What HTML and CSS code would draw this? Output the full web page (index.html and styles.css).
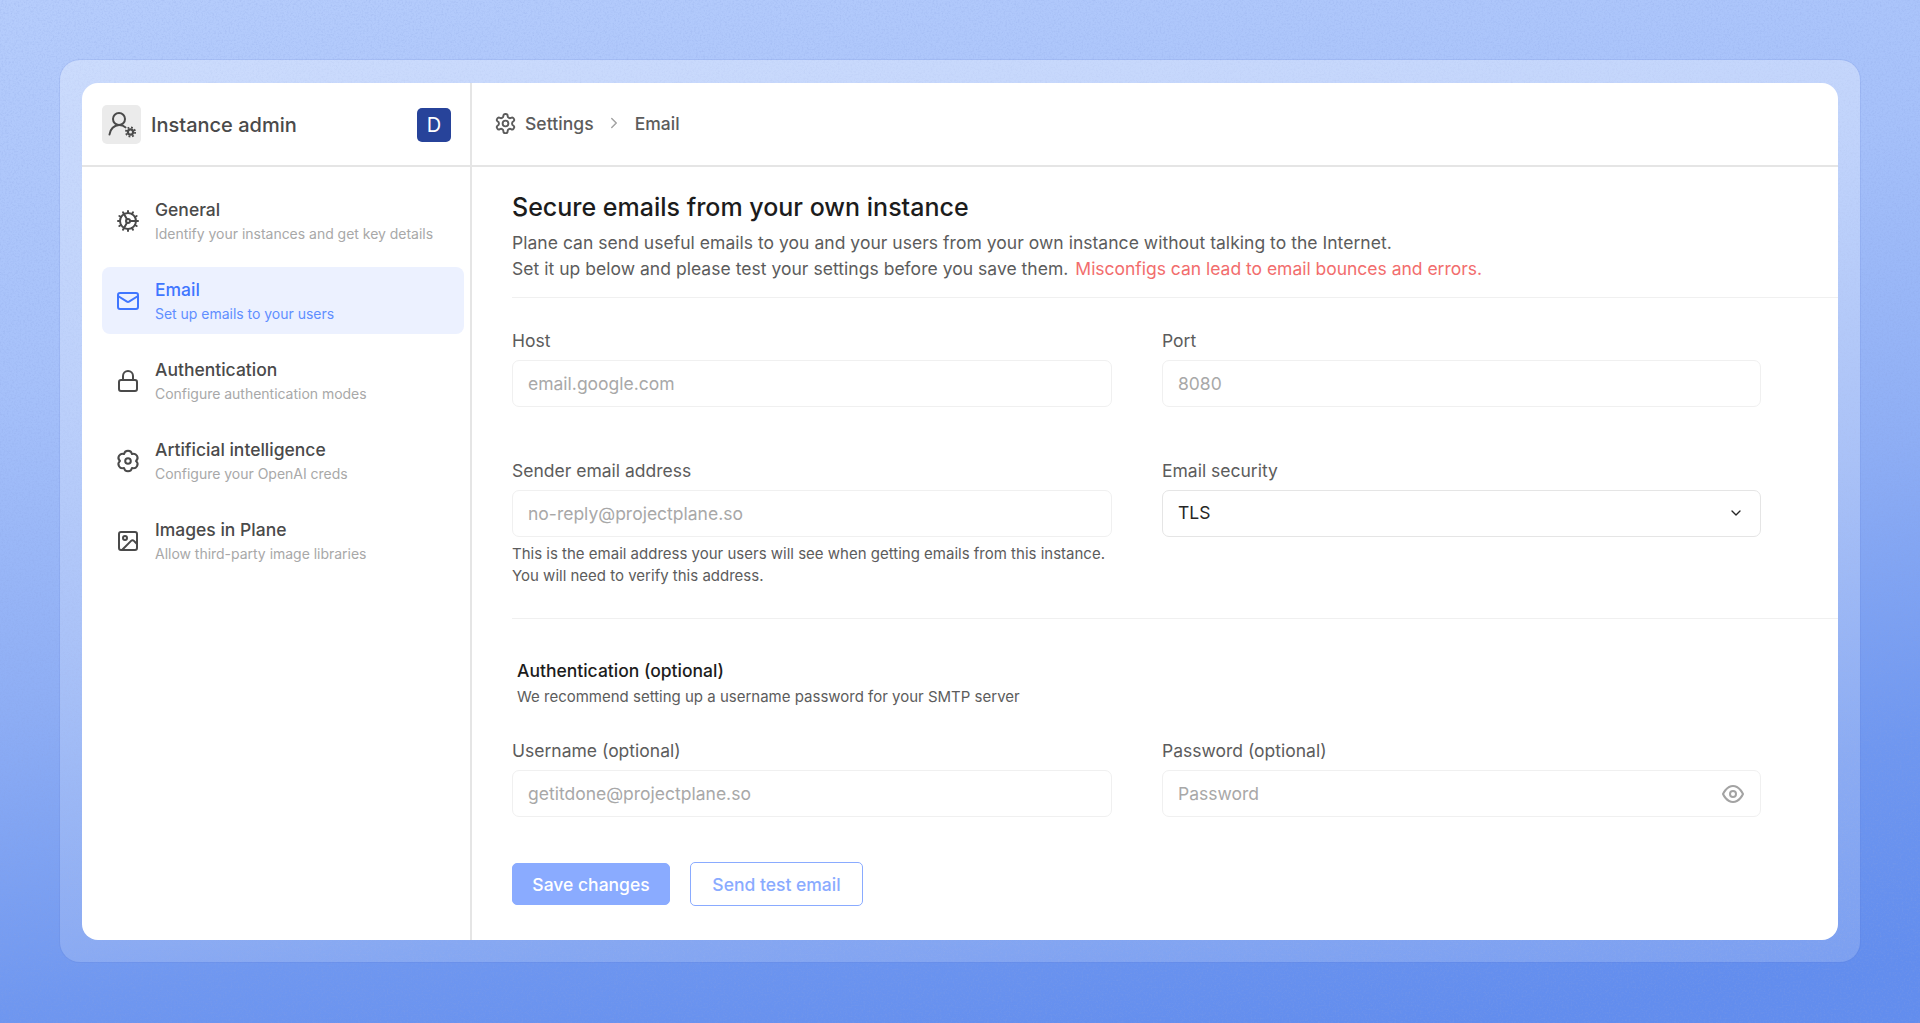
FILE: index.html
```html
<!DOCTYPE html>
<html lang="en">
<head>
  <meta charset="UTF-8" />
  <meta name="viewport" content="width=device-width, initial-scale=1.0"/>
  <title>Instance admin - Email</title>
  <link rel="stylesheet" href="styles.css">
</head>
<body>

  <!-- grain over the blue backdrop -->
  <svg class="grain" width="100%" height="100%" aria-hidden="true">
    <filter id="noise">
      <feTurbulence type="fractalNoise" baseFrequency="0.55" numOctaves="3" stitchTiles="stitch"/>
      <feColorMatrix type="matrix" values="0 0 0 0 0.25  0 0 0 0 0.35  0 0 0 0 0.75  0 0 0 1.6 -0.7"/>
    </filter>
    <rect width="100%" height="100%" filter="url(#noise)"/>
  </svg>

  <div class="frame">
    <div class="window">

      <aside class="sidebar">
        <div class="sidebar-head">
          <span class="admin-icon">
            <svg class="icon" width="39" height="39" viewBox="0 0 39 39"><circle cx="17" cy="14" r="6"/><path d="M7.500 29.500c.6-5.200 4.600-9.500 9.700-9.500 2.500 0 4.700.8 6.300 2.400"/><circle cx="28.500" cy="27" r="2.600" stroke-width="2.200"/><circle cx="28.500" cy="27" r="4.600" stroke-width="1.800" stroke-dasharray="1.800 1.810" stroke-linecap="butt"/></svg>
          </span>
          <span class="admin-name">Instance admin</span>
          <span class="avatar">D</span>
        </div>

        <nav class="nav">
          <a class="nav-item">
            <svg class="icon" width="24" height="24" viewBox="0 0 24 24"><path d="M12 20a8 8 0 1 0 0-16 8 8 0 0 0 0 16Z"/><path d="M12 14a2 2 0 1 0 0-4 2 2 0 0 0 0 4Z"/><path d="M12 2v2"/><path d="M12 22v-2"/><path d="m17 20.66-1-1.73"/><path d="M11 10.27 7 3.34"/><path d="m20.66 17-1.73-1"/><path d="m3.34 7 1.73 1"/><path d="M14 12h8"/><path d="M2 12h2"/><path d="m20.66 7-1.73 1"/><path d="m3.34 17 1.73-1"/><path d="m17 3.34-1 1.73"/><path d="m11 13.73-4 6.93"/></svg>
            <div>
              <div class="nav-title">General</div>
              <div class="nav-sub">Identify your instances and get key details</div>
            </div>
          </a>
          <a class="nav-item active">
            <svg class="icon" width="24" height="24" viewBox="0 0 24 24"><rect width="20" height="16" x="2" y="4" rx="2"/><path d="m22 7-8.97 5.7a1.94 1.94 0 0 1-2.06 0L2 7"/></svg>
            <div>
              <div class="nav-title">Email</div>
              <div class="nav-sub">Set up emails to your users</div>
            </div>
          </a>
          <a class="nav-item">
            <svg class="icon" width="24" height="24" viewBox="0 0 24 24"><rect width="18" height="11" x="3" y="11" rx="2"/><path d="M7 11V7a5 5 0 0 1 10 0v4"/></svg>
            <div>
              <div class="nav-title">Authentication</div>
              <div class="nav-sub">Configure authentication modes</div>
            </div>
          </a>
          <a class="nav-item">
            <svg class="icon" width="24" height="24" viewBox="0 0 24 24"><path d="M20 12A4.050 4.050 0 0 1 16 18.930A4.050 4.050 0 0 1 8 18.930A4.050 4.050 0 0 1 4 12A4.050 4.050 0 0 1 8 5.070A4.050 4.050 0 0 1 16 5.070A4.050 4.050 0 0 1 20 12Z"/><circle cx="12" cy="12" r="2.800"/></svg>
            <div>
              <div class="nav-title">Artificial intelligence</div>
              <div class="nav-sub">Configure your OpenAI creds</div>
            </div>
          </a>
          <a class="nav-item">
            <svg class="icon" width="24" height="24" viewBox="0 0 24 24"><rect width="18" height="18" x="3" y="3" rx="2"/><circle cx="9" cy="9" r="2"/><path d="m21 15-3.086-3.086a2 2 0 0 0-2.828 0L6 21"/></svg>
            <div>
              <div class="nav-title">Images in Plane</div>
              <div class="nav-sub">Allow third-party image libraries</div>
            </div>
          </a>
        </nav>
      </aside>

      <main class="main">
        <header class="topbar">
          <svg class="icon" width="23" height="23" viewBox="0 0 24 24"><path d="M12.22 2h-.44a2 2 0 0 0-2 2v.18a2 2 0 0 1-1 1.73l-.43.25a2 2 0 0 1-2 0l-.15-.08a2 2 0 0 0-2.73.73l-.22.38a2 2 0 0 0 .73 2.73l.15.1a2 2 0 0 1 1 1.72v.51a2 2 0 0 1-1 1.74l-.15.09a2 2 0 0 0-.73 2.73l.22.38a2 2 0 0 0 2.73.73l.15-.08a2 2 0 0 1 2 0l.43.25a2 2 0 0 1 1 1.73V20a2 2 0 0 0 2 2h.44a2 2 0 0 0 2-2v-.18a2 2 0 0 1 1-1.73l.43-.25a2 2 0 0 1 2 0l.15.08a2 2 0 0 0 2.73-.73l.22-.39a2 2 0 0 0-.73-2.73l-.15-.08a2 2 0 0 1-1-1.74v-.5a2 2 0 0 1 1-1.74l.15-.09a2 2 0 0 0 .73-2.73l-.22-.38a2 2 0 0 0-2.73-.73l-.15.08a2 2 0 0 1-2 0l-.43-.25a2 2 0 0 1-1-1.73V4a2 2 0 0 0-2-2z"/><circle cx="12" cy="12" r="3"/></svg>
          <span class="crumb">Settings</span>
          <svg class="icon crumb-sep" width="18" height="18" viewBox="0 0 24 24"><path d="m9 18 6-6-6-6"/></svg>
          <span class="crumb">Email</span>
        </header>

        <section class="content">
          <div class="intro">
            <h1>Secure emails from your own instance</h1>
            <p>Plane can send useful emails to you and your users from your own instance without talking to the Internet.</p>
            <p>Set it up below and please test your settings before you save them. <span class="warn">Misconfigs can lead to email bounces and errors.</span></p>
          </div>

          <div class="form-grid first">
            <div class="field">
              <label>Host</label>
              <input type="text" placeholder="email.google.com" />
            </div>
            <div class="field">
              <label>Port</label>
              <input type="text" placeholder="8080" />
            </div>
            <div class="field">
              <label>Sender email address</label>
              <input type="text" placeholder="no-reply@projectplane.so" />
              <p class="help">This is the email address your users will see when getting emails from this instance.<br>You will need to verify this address.</p>
            </div>
            <div class="field">
              <label>Email security</label>
              <div class="select">
                <span>TLS</span>
                <svg class="icon" width="16" height="16" viewBox="0 0 24 24"><path d="m6 9 6 6 6-6"/></svg>
              </div>
            </div>
          </div>

          <div class="auth">
            <div class="auth-head">
              <h2>Authentication (optional)</h2>
              <p>We recommend setting up a username password for your SMTP server</p>
            </div>
            <div class="form-grid">
              <div class="field">
                <label>Username (optional)</label>
                <input type="text" placeholder="getitdone@projectplane.so" />
              </div>
              <div class="field">
                <label>Password (optional)</label>
                <div class="password">
                  <input type="password" placeholder="Password" />
                  <svg class="icon eye" width="24" height="24" viewBox="0 0 24 24"><path d="M2 12s3.500-8 10-8 10 8 10 8-3.500 8-10 8-10-8-10-8Z"/><circle cx="12" cy="12" r="3"/></svg>
                </div>
              </div>
            </div>
          </div>

          <div class="actions">
            <button class="btn primary">Save changes</button>
            <button class="btn outline">Send test email</button>
          </div>
        </section>
      </main>

    </div>
  </div>

</body>
</html>
```

FILE: styles.css
```css
:root {
  --text-dark: #1c1c1c;
  --text-body: #5c5c5c;
  --text-muted: #a8a8a8;
  --line: #e5e5e5;
  --line-light: #f0f0f0;
  --primary: #3f76ff;
}

* {
  box-sizing: border-box;
}

html, body {
  height: 100%;
}

body {
  margin: 0;
  padding: 60px 60px 61px;
  font-family: Inter, "Liberation Sans", sans-serif;
  color: var(--text-body);
  background: linear-gradient(172deg, #b6cdfc 0%, #a6c1fa 30%, #8eaef5 55%, #6f97f0 78%, #628dee 95%);
  position: relative;
}

.grain {
  position: absolute;
  inset: 0;
  opacity: 0.35;
}

.frame {
  position: relative;
  height: 100%;
  padding: 23px 22px 22px;
  border-radius: 20px;
  background: linear-gradient(180deg, rgba(255,255,255,0.32), rgba(255,255,255,0.16));
  box-shadow: 0 0 0 1px rgba(80, 110, 200, 0.12);
}

.window {
  display: flex;
  height: 100%;
  background: white;
  border-radius: 16px;
  overflow: hidden;
}

.icon {
  fill: none;
  stroke: currentColor;
  stroke-width: 2;
  stroke-linecap: round;
  stroke-linejoin: round;
  flex-shrink: 0;
}

/* sidebar */

.sidebar {
  width: 390px;
  flex-shrink: 0;
  border-right: 2px solid var(--line);
}

.sidebar-head {
  display: flex;
  align-items: center;
  height: 84px;
  padding: 1px 19px 0 20px;
  border-bottom: 2px solid var(--line);
  color: #4a4a4a;
}

.admin-icon {
  display: flex;
  align-items: center;
  justify-content: center;
  width: 39px;
  height: 39px;
  border-radius: 5px;
  background: #ebebeb;
}

.admin-name {
  margin-left: 10px;
  font-size: 20px;
  font-weight: 500;
}

.avatar {
  margin-left: auto;
  width: 34px;
  height: 34px;
  border-radius: 5px;
  background: #27439a;
  color: white;
  font-size: 20px;
  line-height: 34px;
  text-align: center;
}

.nav {
  display: flex;
  flex-direction: column;
  gap: 13px;
  padding: 20px 6px 20px 20px;
}

.nav-item {
  display: flex;
  align-items: center;
  gap: 15px;
  height: 67px;
  padding: 0 14px;
  border-radius: 8px;
  color: #4a4a4a;
}

.nav-title {
  font-size: 17.5px;
  font-weight: 500;
  line-height: 26px;
}

.nav-sub {
  font-size: 14px;
  line-height: 21px;
  letter-spacing: -0.02px;
  color: var(--text-muted);
}

.nav-item.active {
  background: #ecf1ff;
  color: var(--primary);
}

.nav-item.active .nav-sub {
  color: #5f8eff;
}

/* main */

.main {
  flex: 1;
  min-width: 0;
}

.topbar {
  display: flex;
  align-items: center;
  height: 84px;
  padding: 0 24px 2px 22px;
  border-bottom: 2px solid var(--line);
  font-size: 17.5px;
  font-weight: 500;
  letter-spacing: 0.05px;
  color: #5c5c5c;
}

.crumb {
  margin-left: 8px;
}

.crumb-sep {
  margin-left: 11px;
  color: #a3a3a3;
}

.crumb-sep + .crumb {
  margin-left: 12px;
}

.content {
  padding-left: 40px;
}

.intro {
  padding: 24px 0 15px;
  border-bottom: 1px solid var(--line-light);
}

.intro h1 {
  margin: 0 0 7px;
  font-size: 25px;
  font-weight: 500;
  line-height: 32px;
  color: var(--text-dark);
}

.intro p {
  margin: 0;
  font-size: 17.5px;
  line-height: 26px;
  letter-spacing: 0.03px;
  color: #5c5c5c;
}

.warn {
  margin-left: 2px;
  letter-spacing: -0.02px;
  color: #f26d6d;
}

.form-grid {
  display: grid;
  grid-template-columns: 600px 599px;
  column-gap: 50px;
}

.form-grid.first {
  row-gap: 51px;
  padding: 30px 0 31px;
  border-bottom: 1px solid var(--line-light);
}

.field label {
  display: block;
  margin-bottom: 6px;
  font-size: 17.5px;
  line-height: 26px;
  color: #5c5c5c;
}

.field input {
  display: block;
  width: 100%;
  height: 47px;
  padding: 0 15px 1px;
  font-family: inherit;
  font-size: 17.5px;
  color: var(--text-dark);
  background: white;
  border: 1.5px solid var(--line-light);
  border-radius: 7px;
  outline: none;
}

.field input::placeholder {
  color: var(--text-muted);
}

.help {
  margin: 6px 0 0;
  font-size: 15px;
  line-height: 22px;
  color: #5c5c5c;
}

.select {
  display: flex;
  align-items: center;
  justify-content: space-between;
  height: 47px;
  padding: 0 16px 2px 15px;
  border: 1.5px solid var(--line);
  border-radius: 7px;
  font-size: 17.5px;
  color: #262626;
}

.password {
  position: relative;
}

.eye {
  position: absolute;
  right: 16px;
  top: 12px;
  color: #a3a3a3;
}

.auth {
  padding-top: 39px;
}

.auth-head {
  padding-left: 5px;
  margin-bottom: 30px;
}

.auth-head h2 {
  margin: 0;
  font-size: 17.5px;
  font-weight: 500;
  line-height: 26px;
  color: var(--text-dark);
}

.auth-head p {
  margin: 2px 0 0;
  font-size: 15px;
  line-height: 22px;
  color: #5c5c5c;
}

.actions {
  display: flex;
  align-items: center;
  gap: 20px;
  margin-top: 45px;
}

.btn {
  height: 42px;
  padding: 0;
  font-family: inherit;
  font-size: 17.5px;
  font-weight: 500;
  border-radius: 5px;
  cursor: pointer;
}

.btn.primary {
  width: 158px;
  background: #8aabff;
  border: 1px solid #8aabff;
  color: white;
}

.btn.outline {
  width: 173px;
  height: 44px;
  background: white;
  border: 1.5px solid #8aabff;
  color: #8aabff;
}
```
